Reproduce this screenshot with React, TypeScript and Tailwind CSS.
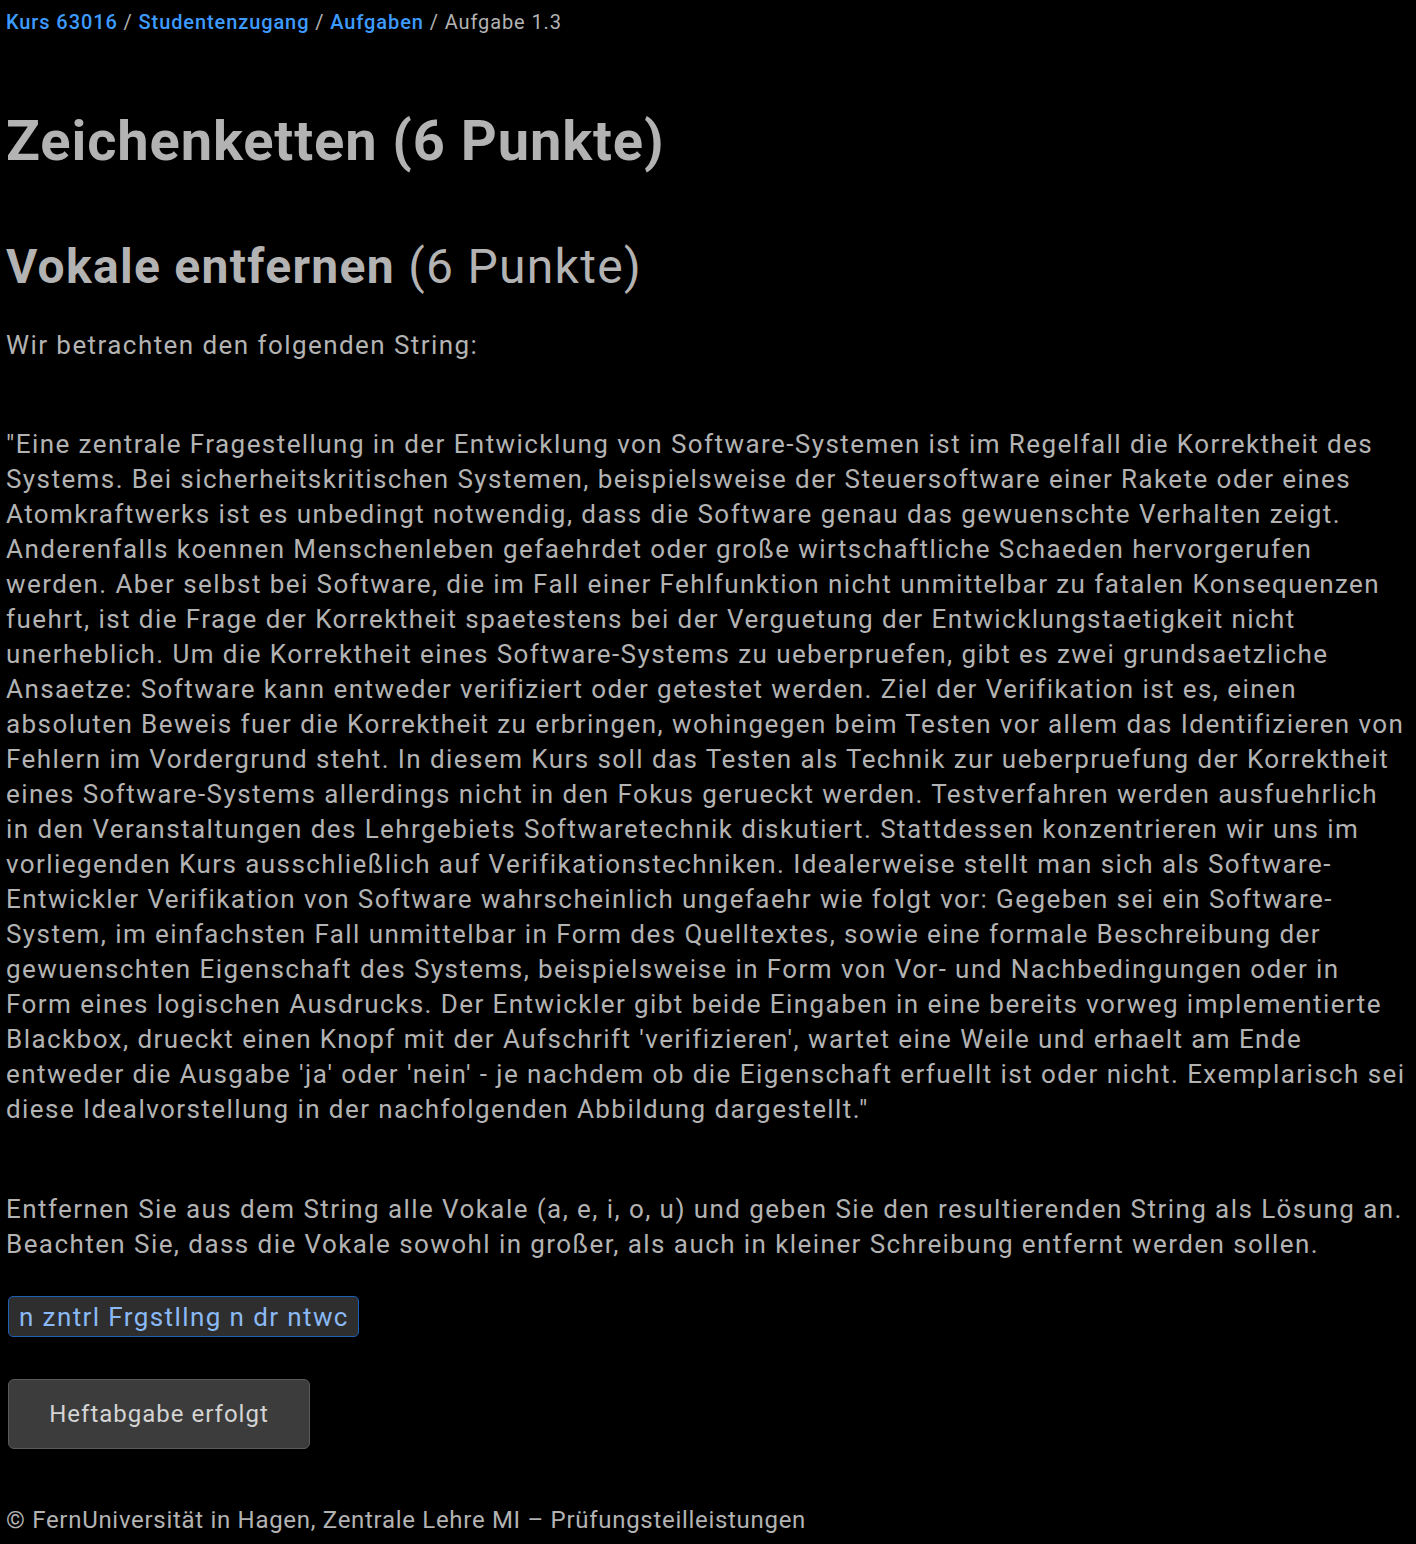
import React from "react";

const QUOTE =
  "\"Eine zentrale Fragestellung in der Entwicklung von Software-Systemen ist im Regelfall die Korrektheit des Systems. Bei sicherheitskritischen Systemen, beispielsweise der Steuersoftware einer Rakete oder eines Atomkraftwerks ist es unbedingt notwendig, dass die Software genau das gewuenschte Verhalten zeigt. Anderenfalls koennen Menschenleben gefaehrdet oder große wirtschaftliche Schaeden hervorgerufen werden. Aber selbst bei Software, die im Fall einer Fehlfunktion nicht unmittelbar zu fatalen Konsequenzen fuehrt, ist die Frage der Korrektheit spaetestens bei der Verguetung der Entwicklungstaetigkeit nicht unerheblich. Um die Korrektheit eines Software-Systems zu ueberpruefen, gibt es zwei grundsaetzliche Ansaetze: Software kann entweder verifiziert oder getestet werden. Ziel der Verifikation ist es, einen absoluten Beweis fuer die Korrektheit zu erbringen, wohingegen beim Testen vor allem das Identifizieren von Fehlern im Vordergrund steht. In diesem Kurs soll das Testen als Technik zur ueberpruefung der Korrektheit eines Software-Systems allerdings nicht in den Fokus gerueckt werden. Testverfahren werden ausfuehrlich in den Veranstaltungen des Lehrgebiets Softwaretechnik diskutiert. Stattdessen konzentrieren wir uns im vorliegenden Kurs ausschließlich auf Verifikationstechniken. Idealerweise stellt man sich als Software-Entwickler Verifikation von Software wahrscheinlich ungefaehr wie folgt vor: Gegeben sei ein Software-System, im einfachsten Fall unmittelbar in Form des Quelltextes, sowie eine formale Beschreibung der gewuenschten Eigenschaft des Systems, beispielsweise in Form von Vor- und Nachbedingungen oder in Form eines logischen Ausdrucks. Der Entwickler gibt beide Eingaben in eine bereits vorweg implementierte Blackbox, drueckt einen Knopf mit der Aufschrift 'verifizieren', wartet eine Weile und erhaelt am Ende entweder die Ausgabe 'ja' oder 'nein' - je nachdem ob die Eigenschaft erfuellt ist oder nicht. Exemplarisch sei diese Idealvorstellung in der nachfolgenden Abbildung dargestellt.\"";

const ANSWER = QUOTE.slice(1, -1).replace(/[aeiouAEIOU]/g, "");

export default function App() {
  return (
    <div
      className="min-h-[1544px] bg-black text-[#b3b3b3] pl-[6px] pr-[10px]"
      style={{ fontFamily: "Roboto, 'Noto Sans', sans-serif" }}
    >
      <nav className="pt-[9px] text-[20px] leading-[26px] tracking-[0.9px]">
        <a className="text-[#3d9bff] font-medium">Kurs 63016</a>
        <span> / </span>
        <a className="text-[#3d9bff] font-medium">Studentenzugang</a>
        <span> / </span>
        <a className="text-[#3d9bff] font-medium">Aufgaben</a>
        <span> / </span>
        <span>Aufgabe 1.3</span>
      </nav>

      <h1 className="mt-[74px] text-[56px] leading-[64px] font-bold tracking-[0.9px]">
        Zeichenketten (6 Punkte)
      </h1>

      <h2 className="mt-[66px] text-[48px] leading-[56px] tracking-[1.3px]">
        <span className="font-bold">Vokale entfernen</span>{" "}
        <span className="font-normal">(6 Punkte)</span>
      </h2>

      <div className="text-[26px] leading-[35px] tracking-[1.43px]">
        <p className="mt-[33px]">Wir betrachten den folgenden String:</p>
        <p className="mt-[64px]">{QUOTE}</p>
        <p className="mt-[65px]">
          Entfernen Sie aus dem String alle Vokale (a, e, i, o, u) und geben Sie
          den resultierenden String als Lösung an. Beachten Sie, dass die Vokale
          sowohl in großer, als auch in kleiner Schreibung entfernt werden
          sollen.
        </p>
      </div>

      <div className="mt-[34px] pl-[2px]">
        <input
          type="text"
          readOnly
          value={ANSWER}
          className="w-[351px] h-[41px] rounded-[5px] border border-[#1c5fb5] bg-[#2e2e2e] px-[10px] text-[26px] tracking-[1.4px] text-[#8ab9f5] outline-none"
          style={{ fontFamily: "Roboto, sans-serif" }}
        />
      </div>

      <div className="mt-[42px] pl-[2px]">
        <button className="w-[302px] h-[70px] rounded-[6px] border border-[#5a5a5a] bg-[#3c3c3c] text-[24px] tracking-[1px] text-[#d4d4d4]">
          Heftabgabe erfolgt
        </button>
      </div>

      <footer className="mt-[55px] pb-[8px] text-[24px] leading-[32px] tracking-[0.7px]">
        © FernUniversität in Hagen, Zentrale Lehre MI – Prüfungsteilleistungen
      </footer>
    </div>
  );
}
